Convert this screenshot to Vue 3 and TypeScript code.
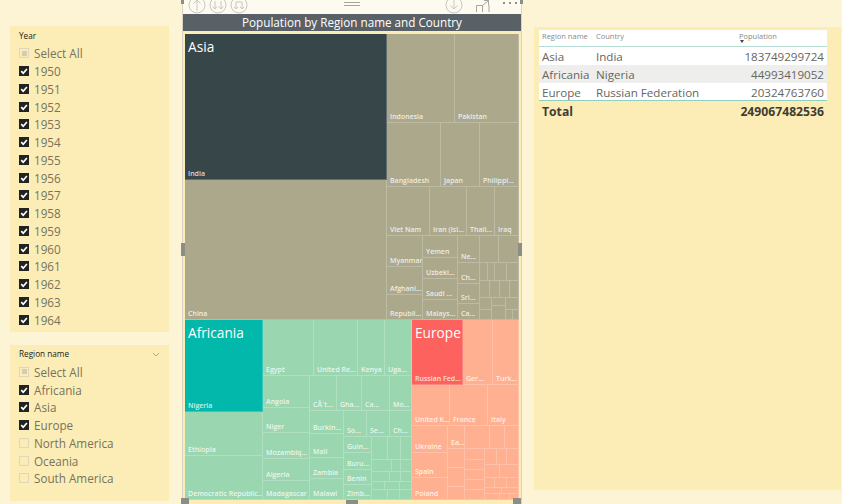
<script setup lang="ts">
type Check = 'on' | 'off' | 'some'

interface SlicerItem {
  label: string
  state: Check
}

interface Cell {
  box: number[]
  label?: string
  title?: string
  tone: string
}

const years = Array.from({ length: 15 }, (_, i) => String(1950 + i))

const yearItems: SlicerItem[] = [
  { label: 'Select All', state: 'some' },
  ...years.map((label): SlicerItem => ({ label, state: 'on' })),
]

const regionItems: SlicerItem[] = [
  { label: 'Select All', state: 'some' },
  { label: 'Africania', state: 'on' },
  { label: 'Asia', state: 'on' },
  { label: 'Europe', state: 'on' },
  { label: 'North America', state: 'off' },
  { label: 'Oceania', state: 'off' },
  { label: 'South America', state: 'off' },
]

const rows = [
  { region: 'Asia', country: 'India', population: '183749299724' },
  { region: 'Africania', country: 'Nigeria', population: '44993419052' },
  { region: 'Europe', country: 'Russian Federation', population: '20324763760' },
]

// page coordinates of the treemap's left/top edge
const ORIGIN_X = 184
const ORIGIN_Y = 34

const named = (tone: string, list: [number, number, number, number, string?][]): Cell[] =>
  list.map(([a, b, c, d, label]) => ({ box: [a, b, c, d], label, tone }))

const cells: Cell[] = [
  { box: [185, 34, 387, 180], label: 'India', title: 'Asia', tone: 'asia-top' },
  ...named('asia', [
    [185, 180, 387, 320, 'China'],
    [387, 34, 455, 123, 'Indonesia'],
    [455, 34, 519, 123, 'Pakistan'],
    [387, 123, 441, 187, 'Bangladesh'],
    [441, 123, 480, 187, 'Japan'],
    [480, 123, 519, 187, 'Philippi...'],
    [387, 187, 430, 236, 'Viet Nam'],
    [430, 187, 467, 236, 'Iran (Isl...'],
    [467, 187, 495, 236, 'Thail...'],
    [495, 187, 519, 236, 'Iraq'],
    [387, 236, 423, 267, 'Myanmar'],
    [387, 267, 423, 295, 'Afghani...'],
    [387, 295, 423, 320, 'Republi...'],
    [423, 236, 458, 258, 'Yemen'],
    [423, 258, 458, 279, 'Uzbeki...'],
    [423, 279, 458, 300, 'Saudi ...'],
    [423, 300, 458, 320, 'Malays...'],
    [458, 236, 480, 263, 'Ne...'],
    [458, 263, 480, 284, 'Ch...'],
    [458, 284, 480, 304, 'Sri...'],
    [458, 304, 480, 320, 'Ca...'],
    [480, 236, 499, 263],
    [499, 236, 519, 263],
    [480, 263, 488, 281],
    [488, 263, 495, 281],
    [495, 263, 507, 281],
    [507, 263, 519, 281],
    [480, 281, 490, 298],
    [490, 281, 500, 298],
    [500, 281, 510, 298],
    [510, 281, 519, 298],
    [480, 298, 492, 310],
    [492, 298, 506, 306],
    [492, 306, 506, 320],
    [506, 298, 519, 310],
    [480, 310, 492, 320],
    [506, 310, 513, 320],
    [513, 310, 519, 320],
  ]),
  { box: [185, 320, 263, 412], label: 'Nigeria', title: 'Africania', tone: 'africa-top' },
  ...named('africa', [
    [185, 412, 263, 456, 'Ethiopia'],
    [185, 456, 263, 500, 'Democratic Republic...'],
    [263, 320, 314, 376, 'Egypt'],
    [314, 320, 358, 376, 'United Re...'],
    [358, 320, 385, 376, 'Kenya'],
    [385, 320, 412, 376, 'Uga...'],
    [263, 376, 310, 408, 'Angola'],
    [310, 376, 337, 411, 'CÃ´t...'],
    [337, 376, 362, 411, 'Gha...'],
    [362, 376, 390, 411, 'Ca...'],
    [390, 376, 412, 411, 'Mo...'],
    [263, 408, 310, 433, 'Niger'],
    [263, 433, 310, 459, 'Mozambiq...'],
    [263, 459, 310, 481, 'Algeria'],
    [263, 481, 310, 500, 'Madagascar'],
    [310, 411, 344, 434, 'Burkin...'],
    [310, 434, 344, 458, 'Mali'],
    [310, 458, 344, 479, 'Zambia'],
    [310, 479, 344, 500, 'Malawi'],
    [344, 411, 367, 437, 'So...'],
    [367, 411, 390, 437, 'Se...'],
    [390, 411, 412, 437, 'Ch...'],
    [344, 437, 372, 453, 'Guin...'],
    [344, 453, 372, 470, 'Buru...'],
    [344, 470, 372, 485, 'Benin'],
    [344, 485, 372, 500, 'Zimb...'],
    [372, 437, 388, 460],
    [388, 437, 401, 460],
    [401, 437, 412, 460],
    [372, 460, 392, 472],
    [392, 460, 401, 472],
    [401, 460, 412, 472],
    [372, 472, 390, 482],
    [390, 472, 401, 482],
    [401, 472, 412, 482],
    [372, 482, 385, 490],
    [385, 482, 400, 490],
    [400, 482, 412, 490],
    [372, 490, 388, 500],
    [388, 490, 400, 500],
    [400, 490, 412, 500],
  ]),
  { box: [412, 320, 463, 385], label: 'Russian Fed...', title: 'Europe', tone: 'europe-top' },
  ...named('europe', [
    [463, 320, 493, 385, 'Ger...'],
    [493, 320, 519, 385, 'Turk...'],
    [412, 385, 450, 426, 'United K...'],
    [450, 385, 488, 426, 'France'],
    [488, 385, 519, 426, 'Italy'],
    [412, 426, 448, 453, 'Ukraine'],
    [412, 453, 448, 478, 'Spain'],
    [412, 478, 448, 500, 'Poland'],
    [448, 426, 465, 449, 'Ea...'],
    [465, 426, 490, 449],
    [490, 426, 505, 449],
    [505, 426, 519, 449],
    [448, 449, 465, 468],
    [448, 468, 465, 487],
    [448, 487, 465, 500],
    [465, 449, 485, 460],
    [465, 460, 485, 470],
    [465, 470, 485, 480],
    [465, 480, 485, 490],
    [465, 490, 485, 500],
    [485, 449, 497, 465],
    [497, 449, 507, 465],
    [507, 449, 519, 465],
    [485, 465, 500, 478],
    [500, 465, 519, 478],
    [485, 478, 495, 488],
    [495, 478, 507, 488],
    [507, 478, 519, 488],
    [485, 488, 502, 494],
    [502, 488, 519, 494],
    [485, 494, 500, 500],
    [500, 494, 510, 500],
    [510, 494, 519, 500],
  ]),
]

const cellStyle = (cell: Cell) => {
  const [a, b, c, d] = cell.box
  return {
    left: `${a - ORIGIN_X}px`,
    top: `${b - ORIGIN_Y}px`,
    width: `${c - a}px`,
    height: `${d - b}px`,
  }
}
</script>

<template>
  <div class="page">
    <aside class="slicers">
      <section class="slicer year">
        <div class="slicer-title">Year</div>
        <div v-for="item in yearItems" :key="item.label" class="slicer-row">
          <span class="box" :class="item.state">
            <svg v-if="item.state === 'on'" width="10" height="10" viewBox="0 0 10 10">
              <path d="M2.2 5.2 4.2 7.2 7.9 3" fill="none" stroke="#fff" stroke-width="1.7" />
            </svg>
          </span>
          <span>{{ item.label }}</span>
        </div>
      </section>

      <section class="slicer region">
        <div class="slicer-title">
          Region name
          <svg class="chevron" width="8" height="5" viewBox="0 0 8 5">
            <path d="M1 1 4 4 7 1" fill="none" stroke="#9a9580" stroke-width="0.8" />
          </svg>
        </div>
        <div v-for="item in regionItems" :key="item.label" class="slicer-row">
          <span class="box" :class="item.state">
            <svg v-if="item.state === 'on'" width="10" height="10" viewBox="0 0 10 10">
              <path d="M2.2 5.2 4.2 7.2 7.9 3" fill="none" stroke="#fff" stroke-width="1.7" />
            </svg>
          </span>
          <span>{{ item.label }}</span>
        </div>
      </section>
    </aside>

    <main class="visual">
      <div class="toolbar">
        <div class="tool-group">
          <svg width="18" height="14" viewBox="0 4 18 14">
            <circle cx="9" cy="9" r="8" class="ico" />
            <path d="M9 15V4M5.5 7.5 9 4l3.5 3.5" class="ico" />
          </svg>
          <svg width="18" height="14" viewBox="0 4 18 14">
            <circle cx="9" cy="9" r="8" class="ico" />
            <path d="M6 5v8M12 5v8M3.8 10.5 6 13l2.2-2.5M9.8 10.5 12 13l2.2-2.5" class="ico" />
          </svg>
          <svg width="18" height="14" viewBox="0 4 18 14">
            <circle cx="9" cy="9" r="8" class="ico" />
            <path d="M6 13V6h6v7M4 11l2 2 2-2M10 11l2 2 2-2" class="ico" />
          </svg>
        </div>
        <div class="grip"><i></i><i></i></div>
        <div class="tool-group right">
          <svg width="18" height="14" viewBox="0 4 18 14">
            <circle cx="9" cy="9" r="8" class="ico" />
            <path d="M9 3v10M5.5 9.5 9 13l3.5-3.5" class="ico" />
          </svg>
          <svg width="14" height="12" viewBox="0 0 14 12">
            <path d="M.5 12V5.5h6V12M6.5 5.5 12.5.5M8 .5h4.5V5M13 5v7" class="ico dark" />
          </svg>
          <div class="dots"><i></i><i></i><i></i></div>
        </div>
      </div>
      <div class="visual-title">Population by Region name and Country</div>
      <div class="treemap">
        <div
          v-for="(cell, i) in cells"
          :key="i"
          class="cell"
          :class="cell.tone"
          :style="cellStyle(cell)"
        >
          <span v-if="cell.title" class="cell-title">{{ cell.title }}</span>
          <span v-if="cell.label" class="cell-label">{{ cell.label }}</span>
        </div>
      </div>
      <i class="handle corner tl"></i>
      <i class="handle corner tr"></i>
      <i class="handle corner bl"></i>
      <i class="handle corner br"></i>
      <i class="handle side ml"></i>
      <i class="handle side mr"></i>
      <i class="handle bottom-mid"></i>
    </main>

    <section class="table-panel">
      <div class="table">
        <div class="head grid-row">
          <span>Region name</span>
          <span>Country</span>
          <span class="pop-head">Population<b class="sort"></b></span>
        </div>
        <div v-for="row in rows" :key="row.region" class="grid-row body-row">
          <span>{{ row.region }}</span>
          <span>{{ row.country }}</span>
          <span class="num">{{ row.population }}</span>
        </div>
        <div class="grid-row total">
          <span>Total</span>
          <span></span>
          <span class="num">249067482536</span>
        </div>
      </div>
    </section>
  </div>
</template>

<style>
html,
body {
  margin: 0;
  background: #fdf4d6;
}
</style>

<style scoped>
.page {
  width: 842px;
  height: 504px;
  display: flex;
  overflow: hidden;
  background: #fdf4d6;
  font-family: 'Open Sans', 'Noto Sans', sans-serif;
}

.slicers {
  width: 159px;
  margin-left: 10px;
  padding-top: 26px;
  display: flex;
  flex-direction: column;
  gap: 13px;
  flex-shrink: 0;
}

.slicer {
  background: #fcedb6;
  padding-left: 9px;
  box-sizing: border-box;
  color: #77735d;
  font-size: 11.7px;
}

.slicer.year {
  height: 306px;
}

.slicer.region {
  height: 156px;
}

.slicer-title {
  position: relative;
  height: 18px;
  padding-top: 3px;
  box-sizing: border-box;
  font-size: 8.2px;
  line-height: 12px;
  color: #222;
}

.chevron {
  position: absolute;
  right: 9px;
  top: 7px;
}

.slicer.year .slicer-title {
  height: 18.5px;
  padding-top: 4px;
}

.slicer-row {
  display: flex;
  align-items: center;
  gap: 5px;
  height: 17.75px;
  white-space: nowrap;
}

.box {
  width: 10px;
  height: 10px;
  flex-shrink: 0;
  box-sizing: border-box;
  display: block;
  position: relative;
}

.box svg {
  display: block;
}

.box.on {
  background: #222;
}

.box.off {
  border: 1.5px solid #ded7bd;
}

.box.some {
  border: 1.5px solid #ded7bd;
}

.box.some::after {
  content: '';
  position: absolute;
  inset: 1.5px;
  background: #d2ccb4;
}

.visual {
  position: relative;
  width: 340px;
  margin-left: 13px;
  flex-shrink: 0;
  background: #fcedb6;
  border-left: 1px solid #d8d4c0;
  border-right: 1px solid #d8d4c0;
  box-sizing: border-box;
}

.toolbar {
  height: 14px;
  background: #fdfaf0;
  display: flex;
  align-items: flex-start;
  justify-content: space-between;
  padding: 0 4px 0 5px;
  position: relative;
}

.tool-group {
  display: flex;
  gap: 3px;
  align-items: flex-start;
}

.tool-group.right {
  gap: 13px;
}

.ico {
  fill: none;
  stroke: #c8c8c2;
  stroke-width: 1;
}

.ico.dark {
  stroke: #a5a5a0;
}

.grip {
  position: absolute;
  left: 161px;
  top: 2px;
  width: 16px;
  display: flex;
  flex-direction: column;
  gap: 2px;
}

.grip i {
  display: block;
  height: 1px;
  background: #a5a5a0;
}

.dots {
  display: flex;
  gap: 4px;
  margin-top: 2px;
}

.dots i {
  display: block;
  width: 2px;
  height: 2px;
  background: #8f8f8a;
}

.visual-title {
  height: 17px;
  background: #596167;
  color: #fff;
  text-align: center;
  font-size: 11.7px;
  line-height: 17px;
  white-space: nowrap;
}

.treemap {
  position: relative;
  width: 335px;
  height: 466px;
  margin: 3px 0 0 1px;
}

.cell {
  position: absolute;
  box-sizing: border-box;
  border-right: 1px solid rgba(255, 255, 255, 0.22);
  border-bottom: 1px solid rgba(255, 255, 255, 0.22);
  overflow: hidden;
}

.asia {
  background: #aca88c;
}

.asia-top {
  background: #374649;
}

.africa {
  background: #9ad6b0;
}

.africa-top {
  background: #01b8aa;
}

.europe {
  background: #ffb091;
}

.europe-top {
  background: #fd625e;
}

.cell-title {
  position: absolute;
  left: 3px;
  top: 3px;
  color: #fff;
  font-size: 13.7px;
  line-height: 20px;
  white-space: nowrap;
}

.cell-label {
  position: absolute;
  left: 3px;
  bottom: 0;
  color: rgba(255, 255, 255, 0.8);
  font-size: 7px;
  font-weight: 600;
  line-height: 10px;
  white-space: nowrap;
}

.handle {
  position: absolute;
  background: #8d8d88;
}

.corner {
  width: 3px;
  height: 4px;
}

.tl {
  left: -2px;
  top: 0;
}

.tr {
  right: -2px;
  top: 0;
}

.bl {
  left: -2px;
  bottom: 0;
  width: 8px;
  height: 6px;
}

.br {
  right: 0;
  bottom: 0;
  width: 8px;
  height: 6px;
}

.side {
  width: 4px;
  height: 13px;
  top: 243px;
}

.ml {
  left: -2px;
}

.mr {
  right: -1px;
}

.bottom-mid {
  left: 163px;
  bottom: 0;
  width: 12px;
  height: 4px;
}

.table-panel {
  width: 307px;
  height: 463px;
  margin: 27px 0 0 12px;
  flex-shrink: 0;
  background: #fcedb6;
  padding: 3px 14px 0 5px;
  box-sizing: border-box;
}

.grid-row {
  display: grid;
  grid-template-columns: 54px 143px 1fr;
  align-items: center;
  padding: 0 3px;
  white-space: nowrap;
}

.head {
  height: 17px;
  padding-bottom: 4px;
  background: #fff;
  border-bottom: 1px solid #b7ded4;
  color: #8a8a82;
  font-size: 7.5px;
  box-sizing: border-box;
}

.pop-head {
  position: relative;
  display: block;
}

.sort {
  position: absolute;
  left: 1px;
  top: 9px;
  border-left: 2.5px solid transparent;
  border-right: 2.5px solid transparent;
  border-top: 3px solid #444;
}

.body-row {
  height: 18px;
  padding-top: 1px;
  box-sizing: border-box;
  background: #fff;
  color: #66665f;
  font-size: 11.6px;
}

.body-row:nth-child(3) {
  background: #eeeeec;
}

.body-row:nth-child(4) {
  border-bottom: 1px solid #8fcfbf;
}

.num {
  text-align: right;
}

.total {
  height: 21px;
  color: #3f3d33;
  font-size: 12.2px;
  font-weight: 700;
}
</style>
